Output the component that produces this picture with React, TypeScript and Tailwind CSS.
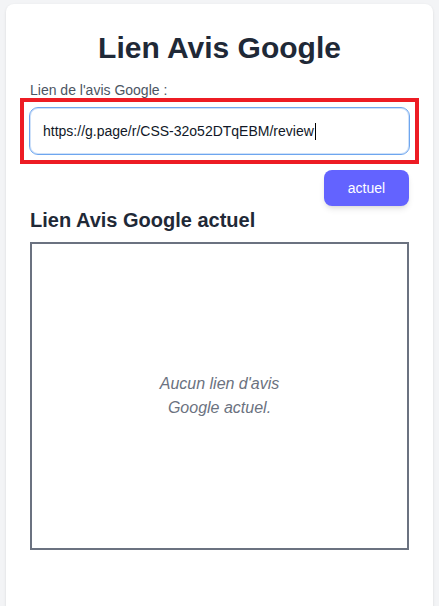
import React from "react";

export default function App() {
  return (
    <div
      className="min-h-[606px] bg-[#f3f4f6] px-[6px] pt-[4px]"
      style={{ fontFamily: '"Liberation Sans", Arial, sans-serif' }}
    >
      <div className="rounded-lg bg-white px-6 pb-[80px] pt-[26px] shadow-sm">
        <h1 className="text-center text-[30px] font-bold leading-[36px] text-[#1f2937]">
          Lien Avis Google
        </h1>

        <label className="mt-[14px] block text-[14px] leading-[20px] text-[#4b5563]">
          Lien de l'avis Google :
        </label>

        <div className="relative mt-[7px]">
          <div className="-mx-px flex h-[48px] items-center rounded-[9px] border border-[#6ea6ef] px-[13px] text-[14px] text-[#111827] shadow-[inset_0_0_0_1px_#cfe1f9]">
            <span>https://g.page/r/CSS-32o52DTqEBM/review</span>
            <span className="ml-[1px] inline-block h-[17px] w-px bg-black" />
          </div>
          <div className="pointer-events-none absolute -inset-x-[10px] -inset-y-[9px] border-4 border-[#ed1c24]" />
        </div>

        <div className="mt-[15px] flex justify-end">
          <button className="h-[36px] w-[85px] rounded-lg bg-[#6363ff] text-[14px] text-white shadow-md">
            actuel
          </button>
        </div>

        <h2 className="text-[20px] font-bold leading-[28px] text-[#1f2937]">
          Lien Avis Google actuel
        </h2>

        <div className="mt-[8px] flex h-[308px] items-center justify-center border-2 border-[#6b7280]">
          <p className="w-[150px] text-center text-[16px] italic leading-[24px] text-[#6b7280]">
            Aucun lien d'avis Google actuel.
          </p>
        </div>
      </div>
    </div>
  );
}
